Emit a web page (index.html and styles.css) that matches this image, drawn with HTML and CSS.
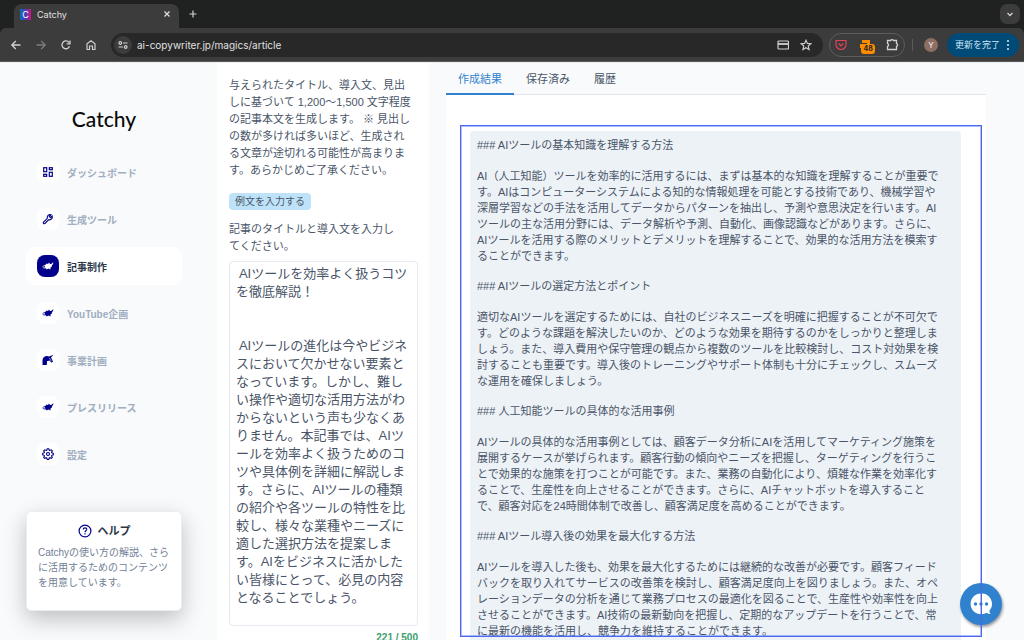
FILE: index.html
```
<!DOCTYPE html>
<html lang="ja">
<head>
<meta charset="utf-8">
<meta name="viewport" content="width=device-width, initial-scale=1">
<title>Catchy</title>
<link rel="stylesheet" href="styles.css">
</head>
<body>
<svg class="defs" aria-hidden="true">
  <symbol id="icon-planet" viewBox="0 0 24 24">
    <path fill="currentColor" d="M9 7l3 1 2-3 2 3 3 0-1 3 2 2-3 2 0 4-4-2-4 2-1-3-3-1 1-3-1-2 3-1z"/>
    <path fill="currentColor" d="M17 9l6-5-4 9z"/>
    <path fill="none" stroke="currentColor" stroke-width="1.500" d="M6 11c-6 1-6 5 0 5 7 0 13-4 16-10"/>
  </symbol>
</svg>
<header class="browser">
  <div class="tabstrip">
    <div class="browser-tab">
      <span class="favicon">C</span>
      <span class="browser-tab-title">Catchy</span>
      <button class="bare" aria-label="タブを閉じる"><svg width="8" height="8" viewBox="0 0 8 8"><path d="M1.500 1.500l5 5M6.500 1.500l-5 5" stroke="currentColor" stroke-width="1.200"/></svg></button>
    </div>
    <button class="bare new-tab" aria-label="新しいタブ"><svg width="10" height="10" viewBox="0 0 10 10"><path d="M5 1.500v7M1.500 5h7" stroke="currentColor" stroke-width="1.200"/></svg></button>
    <button class="bare tab-search" aria-label="タブを検索"><svg width="8" height="8" viewBox="0 0 8 8"><path d="M1.500 3L4 5.500L6.500 3" fill="none" stroke="currentColor" stroke-width="1.300"/></svg></button>
  </div>
  <div class="toolbar">
    <nav class="toolbar-nav" aria-label="ブラウザ">
      <button class="bare" aria-label="戻る"><svg width="12" height="12" viewBox="0 0 12 12"><path d="M10.500 6H2M5.800 2L1.800 6l4 4" fill="none" stroke="currentColor" stroke-width="1.300"/></svg></button>
      <button class="bare dim" aria-label="進む"><svg width="12" height="12" viewBox="0 0 12 12"><path d="M1.500 6H10M6.200 2l4 4-4 4" fill="none" stroke="currentColor" stroke-width="1.300"/></svg></button>
      <button class="bare" aria-label="再読み込み"><svg width="12" height="12" viewBox="0 0 12 12"><path d="M9.500 7.300A3.900 3.900 0 1 1 9 3.500M10 1.500v3.300H6.700" fill="none" stroke="currentColor" stroke-width="1.300"/></svg></button>
      <button class="bare" aria-label="ホーム"><svg width="12" height="12" viewBox="0 0 12 12"><path d="M2 10.500V4.800L6 1.700l4 3.100v5.700H7.500V7h-3v3.500z" fill="none" stroke="currentColor" stroke-width="1.200"/></svg></button>
    </nav>
    <div class="address">
      <button class="bare site-info" aria-label="サイト情報"><svg width="10" height="10" viewBox="0 0 10 10" fill="none" stroke="currentColor" stroke-width="1.200"><circle cx="2.300" cy="3" r="1.300"/><path d="M5 3h4.500M.5 7H5"/><circle cx="7.700" cy="7" r="1.300"/></svg></button>
      <input class="url" type="text" aria-label="アドレス" value="ai-copywriter.jp/magics/article">
      <button class="bare" aria-label="支払い方法"><svg width="12" height="12" viewBox="0 0 12 12"><rect x="1" y="2" width="10.500" height="8" rx="1" fill="none" stroke="currentColor" stroke-width="1.200"/><path d="M1 5h10.500" stroke="currentColor" stroke-width="1.800"/></svg></button>
      <button class="bare" aria-label="ブックマーク"><svg width="12" height="12" viewBox="0 0 12 12"><path d="M6 1.200l1.400 3.200 3.500.3-2.700 2.300.9 3.500L6 8.700l-3.100 1.800.9-3.500L1.100 4.700l3.500-.3z" fill="none" stroke="currentColor" stroke-width="1.100"/></svg></button>
    </div>
    <div class="extensions">
      <button class="bare pocket" aria-label="Pocket"><svg width="12" height="12" viewBox="0 0 12 12" fill="none" stroke="currentColor" stroke-width="1.200"><path d="M1 1.500h10v4a5 5 0 0 1-10 0z"/><path d="M3.700 4.500L6 6.800l2.300-2.300"/></svg></button>
      <button class="bare counter-ext" aria-label="拡張機能 48件"><svg width="12" height="12" viewBox="0 0 12 12"><path d="M2 1h8v8H7V4H2zM0 5h4v4H0z" fill="currentColor"/></svg><span class="ext-badge">48</span></button>
      <button class="bare" aria-label="拡張機能"><svg width="13" height="13" viewBox="0 0 13 13"><path d="M1.500 2.500h3.200a1.500 1.500 0 0 1 2.800 0h3v3a1.500 1.500 0 0 1 0 2.900v3.100h-9V8.400a1.500 1.500 0 0 0 0-2.900z" fill="none" stroke="currentColor" stroke-width="1.300"/></svg></button>
    </div>
    <span class="divider"></span>
    <button class="bare avatar">Y</button>
    <button class="bare update">更新を完了<svg width="4" height="12" viewBox="0 0 4 12" fill="currentColor"><circle cx="2" cy="2" r="1"/><circle cx="2" cy="6" r="1"/><circle cx="2" cy="10" r="1"/></svg></button>
  </div>
</header>

<div class="app">
  <aside class="sidebar">
    <div class="logo">Catchy</div>
    <nav class="menu">
      <a class="menu-item" href="#"><span class="tile"><svg width="12" height="12" viewBox="0 0 12 12" fill="none" stroke="currentColor" stroke-width="1.200"><rect x="1.700" y="1.700" width="3" height="4"/><rect x="7.300" y="1.700" width="3" height="2"/><rect x="1.700" y="8.300" width="3" height="2"/><rect x="7.300" y="6.300" width="3" height="4"/></svg></span>ダッシュボード</a>
      <a class="menu-item" href="#"><span class="tile"><svg width="12" height="12" viewBox="0 0 12 12" fill="none" stroke="currentColor" stroke-width="1.100"><path d="M1.500 9.200l3.800-3.800C4.800 3 6.600 1.200 9 1.800L7.300 3.500l1.200 1.200 1.700-1.700c.7 2.400-1.100 4.300-3.500 3.700L2.900 10.500a.9.9 0 0 1-1.400-1.300z"/></svg></span>生成ツール</a>
      <a class="menu-item active" href="#" aria-current="page"><span class="tile"><svg width="12" height="12"><use href="#icon-planet"/></svg></span>記事制作</a>
      <a class="menu-item" href="#"><span class="tile"><svg width="12" height="12"><use href="#icon-planet"/></svg></span>YouTube企画</a>
      <a class="menu-item" href="#"><span class="tile"><svg width="12" height="12" viewBox="0 0 12 12"><path d="M.5 11V6.500C.5 3.500 2.500 2 5 2l2 .5L11.500.8 9 3.600l2 3.900-1.200 1.200L7.300 6.500 5 7.300 4.800 11z" fill="currentColor"/><path d="M7.200 3.800l2.200 3.400" stroke="#fff" stroke-width=".6"/></svg></span>事業計画</a>
      <a class="menu-item" href="#"><span class="tile"><svg width="12" height="12"><use href="#icon-planet"/></svg></span>プレスリリース</a>
      <a class="menu-item" href="#"><span class="tile"><svg width="12" height="12" viewBox="0 0 24 24" fill="none" stroke="currentColor" stroke-width="2.200"><path d="M9.500 4.500L10.500 1.500h3l1 3 1.200.5 2.900-1.400 2 2-1.400 2.900.5 1.200 3 1v3l-3 1-.5 1.200 1.400 2.900-2 2-2.900-1.400-1.200.5-1 3h-3l-1-3-1.200-.5-2.900 1.400-2-2 1.400-2.900-.5-1.200-3-1v-3l3-1 .5-1.200-1.400-2.900 2-2L8.300 5z"/><circle cx="12" cy="12" r="3"/></svg></span>設定</a>
    </nav>
    <section class="help">
      <h2 class="help-title"><svg width="14" height="14" viewBox="0 0 14 14" fill="none" stroke="currentColor" stroke-width="1.200"><circle cx="7" cy="7" r="5.900"/><path d="M5.200 5.500C5.300 3.200 8.800 3.300 8.700 5.400 8.600 6.700 7 6.700 7 8.200M7 9.300v1.200"/></svg>ヘルプ</h2>
      <p class="help-text">Catchyの使い方の解説、さら<br>に活用するためのコンテンツ<br>を用意しています。</p>
    </section>
  </aside>

  <section class="editor">
    <p class="lead">与えられたタイトル、導入文、見出<br>しに基づいて 1,200〜1,500 文字程度<br>の記事本文を生成します。 ※ 見出し<br>の数が多ければ多いほど、生成され<br>る文章が途切れる可能性が高まりま<br>す。あらかじめご了承ください。</p>
    <button class="example">例文を入力する</button>
    <label class="lead" for="source">記事のタイトルと導入文を入力し<br>てください。</label>
    <textarea class="source" id="source" rows="20"> AIツールを効率よく扱うコツ
を徹底解説！


 AIツールの進化は今やビジネ
スにおいて欠かせない要素と
なっています。しかし、難し
い操作や適切な活用方法がわ
からないという声も少なくあ
りません。本記事では、AIツ
ールを効率よく扱うためのコ
ツや具体例を詳細に解説しま
す。さらに、AIツールの種類
の紹介や各ツールの特性を比
較し、様々な業種やニーズに
適した選択方法を提案しま
す。AIをビジネスに活かした
い皆様にとって、必見の内容
となることでしょう。</textarea>
    <div class="count">221 / 500</div>
  </section>

  <main class="results">
    <div class="tabs" role="tablist">
      <button class="tab selected" role="tab" aria-selected="true">作成結果</button>
      <button class="tab" role="tab" aria-selected="false">保存済み</button>
      <button class="tab" role="tab" aria-selected="false">履歴</button>
    </div>
    <div class="panel">
      <div class="frame"></div>
      <article class="output">
        <h3>### AIツールの基本知識を理解する方法</h3>
        <p>AI（人工知能）ツールを効率的に活用するには、まずは基本的な知識を理解することが重要で<br>す。AIはコンピューターシステムによる知的な情報処理を可能とする技術であり、機械学習や<br>深層学習などの手法を活用してデータからパターンを抽出し、予測や意思決定を行います。AI<br>ツールの主な活用分野には、データ解析や予測、自動化、画像認識などがあります。さらに、<br>AIツールを活用する際のメリットとデメリットを理解することで、効果的な活用方法を模索す<br>ることができます。</p>
        <h3>### AIツールの選定方法とポイント</h3>
        <p>適切なAIツールを選定するためには、自社のビジネスニーズを明確に把握することが不可欠で<br>す。どのような課題を解決したいのか、どのような効果を期待するのかをしっかりと整理しま<br>しょう。また、導入費用や保守管理の観点から複数のツールを比較検討し、コスト対効果を検<br>討することも重要です。導入後のトレーニングやサポート体制も十分にチェックし、スムーズ<br>な運用を確保しましょう。</p>
        <h3>### 人工知能ツールの具体的な活用事例</h3>
        <p>AIツールの具体的な活用事例としては、顧客データ分析にAIを活用してマーケティング施策を<br>展開するケースが挙げられます。顧客行動の傾向やニーズを把握し、ターゲティングを行うこ<br>とで効果的な施策を打つことが可能です。また、業務の自動化により、煩雑な作業を効率化す<br>ることで、生産性を向上させることができます。さらに、AIチャットボットを導入すること<br>で、顧客対応を24時間体制で改善し、顧客満足度を高めることができます。</p>
        <h3>### AIツール導入後の効果を最大化する方法</h3>
        <p>AIツールを導入した後も、効果を最大化するためには継続的な改善が必要です。顧客フィード<br>バックを取り入れてサービスの改善策を検討し、顧客満足度向上を図りましょう。また、オペ<br>レーションデータの分析を通じて業務プロセスの最適化を図ることで、生産性や効率性を向上<br>させることができます。AI技術の最新動向を把握し、定期的なアップデートを行うことで、常<br>に最新の機能を活用し、競争力を維持することができます。</p>
      </article>
    </div>
  </main>
</div>
<button class="chat" aria-label="チャット"><svg width="42" height="42" viewBox="0 0 42 42"><path d="M21 10.500a10.400 10.400 0 1 0 5.500 19.200c1.300.8 2.800 1.200 4.200 1.200-.9-1-1.300-2-1.300-3.200A10.400 10.400 0 0 0 21 10.500z" fill="#fff"/><g fill="#3182ce"><circle cx="15.500" cy="21" r="1.700"/><circle cx="21" cy="21" r="1.700"/><circle cx="26.500" cy="21" r="1.700"/></g></svg></button>
</body>
</html>
```
FILE: styles.css
```
* { box-sizing: border-box; }

body {
  margin: 0;
  height: 100vh;
  display: flex;
  flex-direction: column;
  overflow: hidden;
  background: #f9fafc;
  color: #4a5568;
  font-family: "Liberation Sans", "Noto Sans CJK JP", sans-serif;
  font-size: 11px;
}

button, input, textarea { font: inherit; color: inherit; }
p, h2, h3 { margin: 0; }
.defs { position: absolute; width: 0; height: 0; }

.bare {
  display: flex;
  align-items: center;
  justify-content: center;
  padding: 0;
  border: 0;
  background: none;
}

/* Browser chrome */
.browser {
  flex: none;
  background: #202221;
  color: #d0d0d0;
  font-family: Inter, "Noto Sans CJK JP", sans-serif;
}
.tabstrip { display: flex; align-items: flex-end; height: 28px; padding: 0 4px 0 14px; }
.browser-tab {
  display: flex;
  align-items: center;
  gap: 6px;
  width: 165px;
  height: 24px;
  padding: 0 8px 4px 6px;
  border-radius: 8px 8px 0 0;
  background: #3c3c3c;
  font-size: 9px;
  color: #e0e0e0;
}
.favicon {
  width: 11px;
  height: 11px;
  background: linear-gradient(90deg, #0b6cc0, #4a3fb0 50%, #d3127f);
  color: #fff;
  font-size: 9px;
  line-height: 11px;
  text-align: center;
}
.browser-tab-title { flex: 1; }
.new-tab { width: 28px; height: 28px; }
.tab-search {
  width: 20px;
  height: 20px;
  margin: 0 0 4px auto;
  border-radius: 7px;
  background: #3c3c3c;
}
.toolbar {
  display: flex;
  align-items: center;
  height: 34px;
  padding: 0 5px 0 10px;
  border-bottom: 1px solid #5a5a5a;
  border-radius: 6px 6px 0 0;
  background: #3c3c3c;
}
.toolbar-nav { display: flex; gap: 13px; margin-right: 14px; }
.dim { color: #7c7c7c; }
.address {
  flex: 1;
  display: flex;
  align-items: center;
  gap: 11px;
  height: 24px;
  padding: 0 11px 0 3px;
  border-radius: 12px;
  background: #282828;
}
.site-info { width: 18px; height: 18px; border-radius: 9px; background: #3c3c3c; }
.url {
  flex: 1;
  min-width: 0;
  margin-left: -6px;
  padding: 0;
  border: 0;
  background: none;
  font-size: 10px;
  color: #e0e0e0;
}
.extensions {
  display: flex;
  align-items: center;
  justify-content: space-between;
  width: 76px;
  height: 24px;
  margin-left: 6px;
  padding: 0 5px;
  border: 1px solid #5c5c5c;
  border-radius: 12px;
}
.pocket { color: #e2435a; }
.counter-ext { position: relative; color: #fb8c00; }
.ext-badge {
  position: absolute;
  top: 5px;
  left: 1px;
  padding: 0 2px;
  border-radius: 3px;
  background: #fb8c00;
  color: #222;
  font-size: 7px;
  font-weight: 700;
  line-height: 10px;
}
.divider { width: 1px; height: 12px; margin: 0 11px 0 7px; background: #5a5a5a; }
.avatar {
  width: 14px;
  height: 14px;
  border-radius: 7px;
  background: #8d6e63;
  color: #fff;
  font-size: 8px;
}
.update {
  gap: 6px;
  height: 24px;
  margin-left: 9px;
  padding: 0 9px 0 8px;
  border-radius: 12px;
  background: #004a77;
  color: #cfe8fb;
  font-size: 9px;
}

/* Application */
.app { flex: 1; min-height: 0; display: flex; border-top: 1px solid #eceef1; }

.sidebar { flex: none; width: 217px; padding: 41px 35px 0 26px; }
.logo {
  height: 30px;
  margin-bottom: 19px;
  color: #0a0a0a;
  font-family: Lato, sans-serif;
  font-size: 21px;
  font-weight: 500;
  line-height: 30px;
  text-align: center;
}
.menu { display: flex; flex-direction: column; gap: 9px; }
.menu-item {
  display: flex;
  align-items: center;
  gap: 8px;
  height: 38px;
  padding-left: 11px;
  border-radius: 9px;
  color: #a0aec0;
  font-size: 10px;
  font-weight: 700;
  text-decoration: none;
}
.tile {
  display: flex;
  align-items: center;
  justify-content: center;
  width: 22px;
  height: 22px;
  border-radius: 8px;
  background: #fff;
  color: #00008b;
}
.active { background: #fff; color: #2d3748; }
.active .tile { background: #00008b; color: #fff; }

.help {
  margin-top: 38px;
  padding: 10px 11px 20px;
  border: 1px solid #e9edf4;
  border-radius: 5px;
  background: #fff;
  box-shadow: 0 8px 22px rgba(0, 0, 0, 0.24);
}
.help-title {
  display: flex;
  align-items: center;
  justify-content: center;
  gap: 6px;
  margin-bottom: 5px;
  color: #2d3748;
  font-size: 11px;
  line-height: 18px;
}
.help-title svg { color: #00008b; }
.help-text { color: #718096; font-size: 10px; line-height: 15px; white-space: nowrap; }

.editor {
  flex: none;
  display: flex;
  flex-direction: column;
  align-items: flex-start;
  width: 212px;
  padding: 14px 11px 0 12px;
  background: #fff;
}
.lead { font-size: 11px; line-height: 17px; white-space: nowrap; }
.example {
  height: 17px;
  margin: 14px 0 11px;
  padding: 0 6px;
  border: 0;
  border-radius: 4px;
  background: #bee3f8;
  font-size: 10px;
  line-height: 17px;
}
.source {
  width: 100%;
  flex: none;
  margin-top: 6px;
  padding: 3px 6px 0;
  border: 1px solid #e6ebf3;
  border-radius: 4px;
  background: #fff;
  font-size: 13px;
  line-height: 18px;
  white-space: pre;
  resize: none;
  overflow: hidden;
}
.count {
  align-self: flex-end;
  margin-top: 4px;
  color: #38a169;
  font-size: 10px;
  font-weight: 700;
  line-height: 15px;
}

.results {
  flex: 1;
  min-width: 0;
  display: flex;
  flex-direction: column;
  margin: 0 38px 0 17px;
}
.tabs { flex: none; display: flex; height: 32px; border-bottom: 1px solid #e2e8f0; }
.tab {
  height: 32px;
  padding: 0 12px;
  border: 0;
  border-bottom: 2px solid transparent;
  background: none;
}
.selected { border-color: #3182ce; color: #3182ce; }
.panel { flex: 1; min-height: 0; position: relative; padding: 36px 25px 0 24px; background: #fff; }
.frame {
  position: absolute;
  z-index: 2;
  inset: 30px 4px 3px 14px;
  border: 1px solid #4a68f0;
  box-shadow: inset 0 0 0 1px rgba(74, 104, 240, 0.45);
  pointer-events: none;
}
.output {
  height: 100%;
  padding: 6px 7px 0;
  border-radius: 4px 4px 0 0;
  background: #edf2f7;
  line-height: 16px;
  white-space: nowrap;
}
.output h3 { margin-bottom: 15px; font-size: 11px; font-weight: 400; }
.output p { margin-bottom: 14px; }

.chat {
  position: fixed;
  z-index: 1;
  right: 22px;
  bottom: 15px;
  width: 42px;
  height: 42px;
  padding: 0;
  border: 0;
  border-radius: 50%;
  background: #3182ce;
  box-shadow: 1px 2px 3px rgba(0, 0, 0, 0.4);
}
.chat svg { display: block; }
```
